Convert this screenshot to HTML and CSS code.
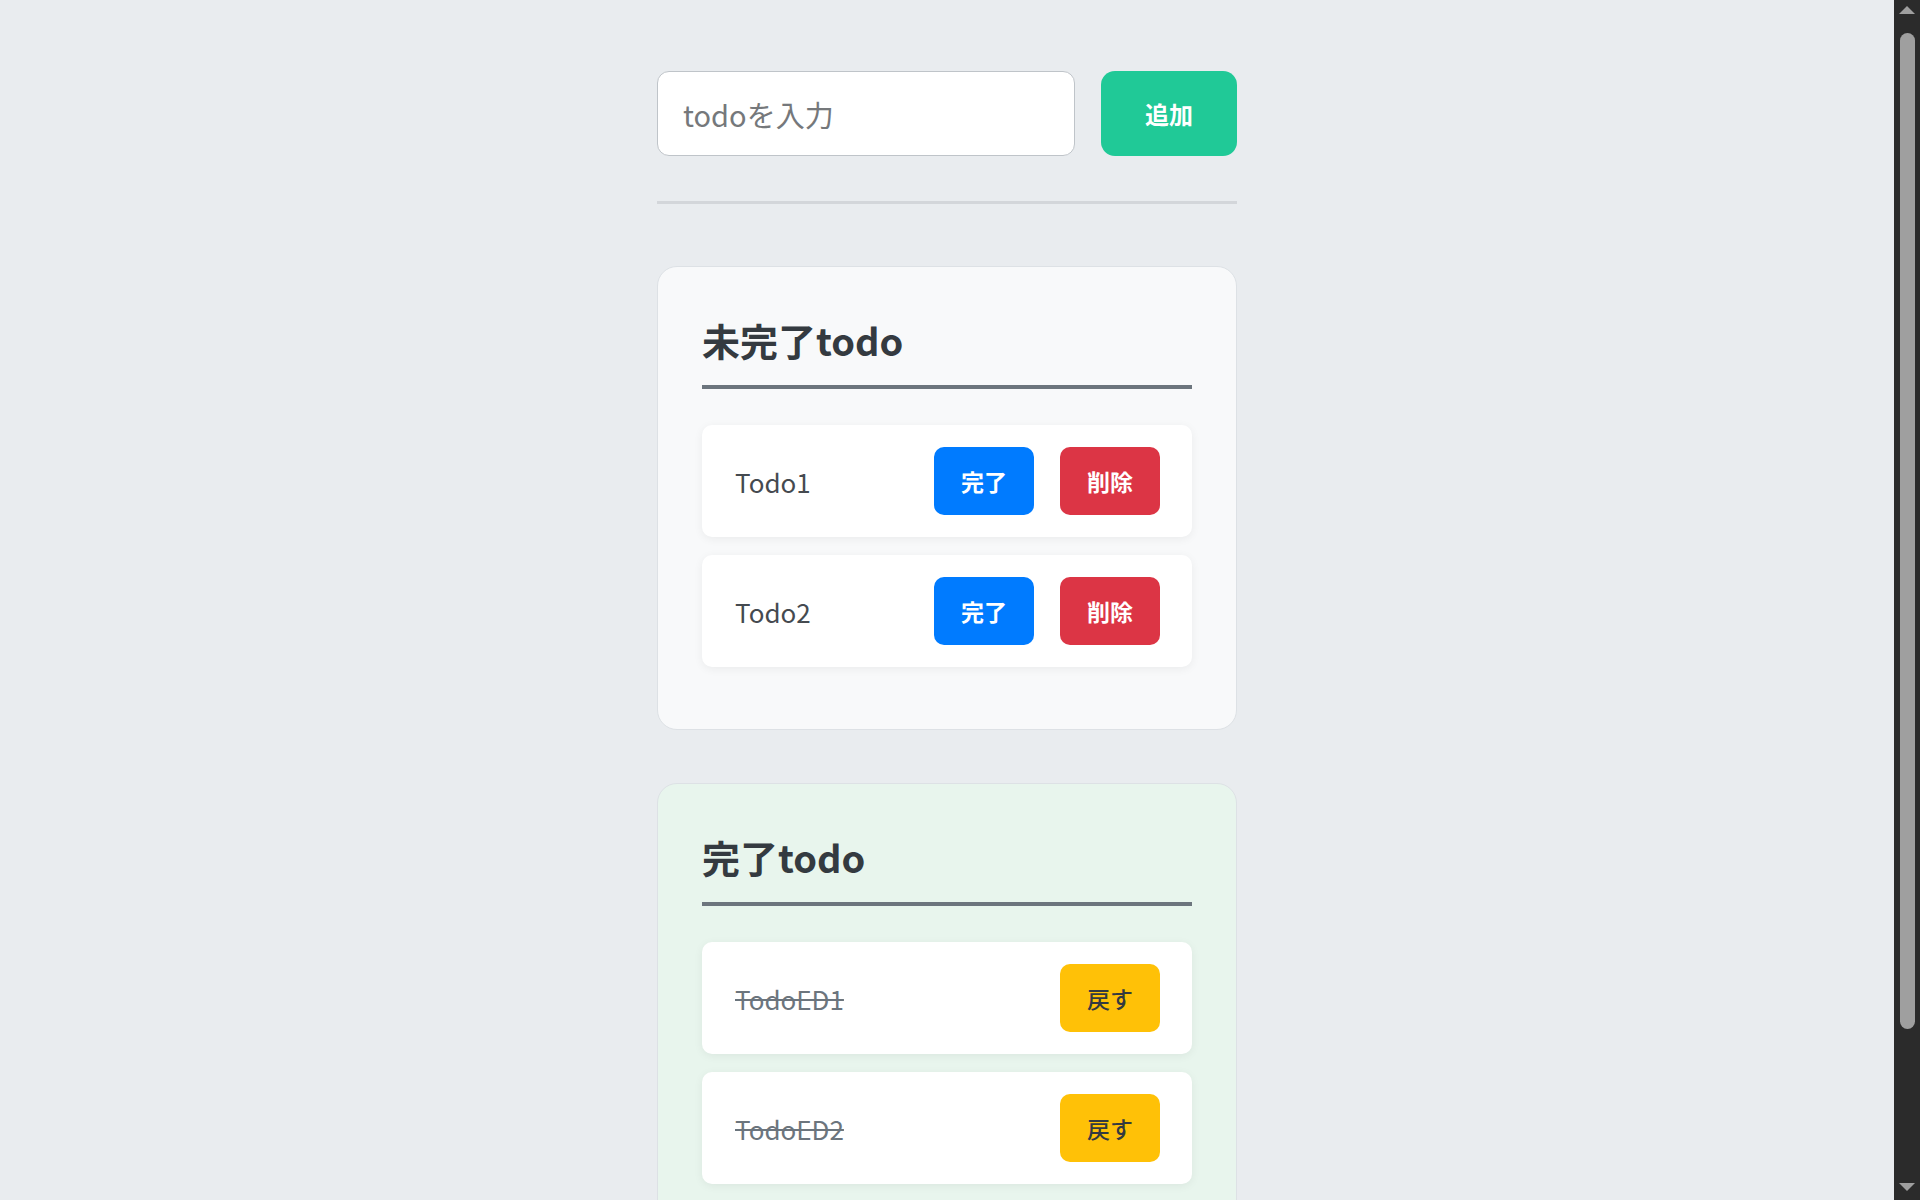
FILE: index.html
```html
<!DOCTYPE html>
<html lang="ja">
<head>
<meta charset="utf-8">
<title>Todo</title>
<link rel="stylesheet" href="styles.css">
</head>
<body>
<div class="app">
  <div class="input-area">
    <input class="todo-input" type="text" placeholder="todoを入力">
    <button class="btn-add">追加</button>
  </div>
  <hr class="divider">
  <section class="card card-incomplete">
    <h2 class="card-title">未完了todo</h2>
    <ul class="todo-list">
      <li class="todo-item">
        <span class="todo-text">Todo1</span>
        <div class="actions">
          <button class="btn btn-complete">完了</button>
          <button class="btn btn-delete">削除</button>
        </div>
      </li>
      <li class="todo-item">
        <span class="todo-text">Todo2</span>
        <div class="actions">
          <button class="btn btn-complete">完了</button>
          <button class="btn btn-delete">削除</button>
        </div>
      </li>
    </ul>
  </section>
  <section class="card card-complete">
    <h2 class="card-title">完了todo</h2>
    <ul class="todo-list">
      <li class="todo-item">
        <span class="todo-text done">TodoED1</span>
        <div class="actions">
          <button class="btn btn-back">戻す</button>
        </div>
      </li>
      <li class="todo-item">
        <span class="todo-text done">TodoED2</span>
        <div class="actions">
          <button class="btn btn-back">戻す</button>
        </div>
      </li>
    </ul>
  </section>
</div>
<div class="scrollbar" aria-hidden="true">
  <span class="scroll-arrow scroll-up"></span>
  <span class="scroll-thumb"></span>
  <span class="scroll-arrow scroll-down"></span>
</div>
</body>
</html>
```

FILE: styles.css
```css
body {
  margin: 0;
  padding-right: 26px;
  background: #e9ecef;
  font-family: "Noto Sans CJK JP", "Noto Sans", sans-serif;
  color: #343a40;
}

.scrollbar {
  position: fixed;
  top: 0;
  right: 0;
  width: 26px;
  height: 100vh;
  background: #2b2b2b;
  display: flex;
  flex-direction: column;
  align-items: center;
  padding: 6px 0 9px;
  box-sizing: border-box;
}

.scroll-arrow {
  width: 0;
  height: 0;
  border-left: 8px solid transparent;
  border-right: 8px solid transparent;
}

.scroll-up {
  border-bottom: 8px solid #9f9f9f;
}

.scroll-down {
  border-top: 8px solid #9f9f9f;
  margin-top: auto;
}

.scroll-thumb {
  width: 15px;
  height: 996px;
  margin-top: 19px;
  background: #9f9f9f;
  border-radius: 8px;
}

.app {
  width: 580px;
  margin: 0 auto;
  padding: 71px 0 130px;
}

.input-area {
  display: flex;
  gap: 26px;
}

.todo-input {
  flex: 1;
  min-width: 0;
  height: 85px;
  box-sizing: border-box;
  border: 1px solid #bfc4c9;
  border-radius: 12px;
  padding: 0 25px;
  font-family: "Noto Sans CJK JP", "Noto Sans", sans-serif;
  font-size: 29px;
  color: #495057;
  background: #fff;
  outline: none;
}

.todo-input::placeholder {
  color: #75787b;
}

.btn-add {
  width: 136px;
  height: 85px;
  border: none;
  border-radius: 14px;
  background: #20c997;
  color: #fff;
  font-family: "Noto Sans CJK JP", "Noto Sans", sans-serif;
  font-size: 24px;
  font-weight: 700;
  cursor: pointer;
}

.divider {
  margin: 45px 0 0;
  border: none;
  height: 3px;
  background: #d3d6da;
}

.card {
  margin-top: 62px;
  padding: 44px;
  border: 1px solid #dde1e5;
  border-radius: 20px;
}

.card + .card {
  margin-top: 53px;
}

.card-incomplete {
  background: #f8f9fa;
}

.card-complete {
  background: #e8f5ed;
}

.card-title {
  margin: 0;
  font-size: 38px;
  font-weight: 700;
  line-height: 46px;
  padding-top: 6px;
  color: #343a40;
  padding-bottom: 22px;
  border-bottom: 4px solid #6c757d;
}

.todo-list {
  list-style: none;
  margin: 36px 0 0;
  padding: 0;
}

.todo-item {
  display: flex;
  align-items: center;
  justify-content: space-between;
  background: #fff;
  border-radius: 10px;
  padding: 22px 32px 22px 33px;
  margin-bottom: 18px;
  box-shadow: 0 2px 10px rgba(0, 0, 0, 0.06);
}

.todo-text {
  font-size: 26px;
  color: #454a50;
}

.todo-text.done {
  color: #6c757d;
  text-decoration: line-through;
}

.actions {
  display: flex;
  gap: 26px;
}

.btn {
  width: 100px;
  height: 68px;
  border: none;
  border-radius: 10px;
  font-family: "Noto Sans CJK JP", "Noto Sans", sans-serif;
  font-size: 23px;
  font-weight: 700;
  cursor: pointer;
}

.btn-complete {
  background: #007bff;
  color: #fff;
}

.btn-delete {
  background: #dc3545;
  color: #fff;
}

.btn-back {
  background: #ffc107;
  color: #343a40;
  font-weight: 500;
}
```
